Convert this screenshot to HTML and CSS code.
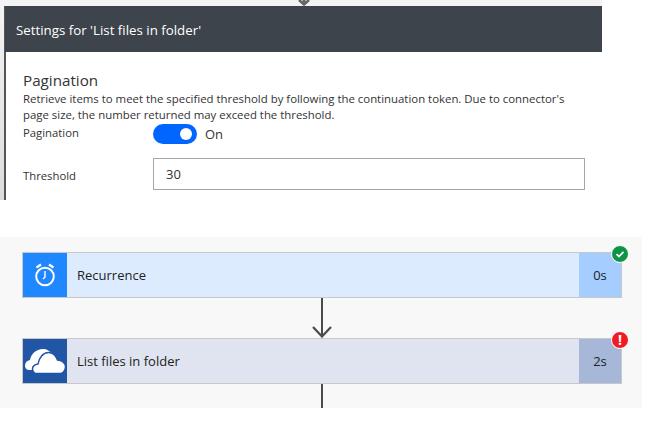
FILE: index.html
```html
<!DOCTYPE html>
<html lang="en">
<head>
    <meta charset="UTF-8">
    <meta name="viewport" content="width=device-width, initial-scale=1.0">
    <title>List files in folder</title>
    <link rel="stylesheet" href="styles.css">
</head>
<body>
    <div class="settings-wrap">
        <svg class="top-arrow" width="16" height="6" viewBox="0 0 16 6" fill="none" stroke="#666"><path d="M8 0 V4" stroke-width="3"/><path d="M3 0 L8 4.500 L13 0" stroke-width="2.6"/></svg>
        <div class="settings">
            <div class="settings-header">Settings for 'List files in folder'</div>
            <div class="settings-body">
                <div class="section-title">Pagination</div>
                <p class="section-desc">Retrieve items to meet the specified threshold by following the continuation token. Due to connector's page size, the number returned may exceed the threshold.</p>
                <div class="field toggle-field">
                    <div class="field-label">Pagination</div>
                    <div class="toggle"><span class="knob"></span></div>
                    <div class="toggle-text">On</div>
                </div>
                <div class="field threshold-field">
                    <div class="field-label">Threshold</div>
                    <div class="input-box">30</div>
                </div>
            </div>
        </div>
    </div>

    <div class="run">
        <div class="card card-recurrence">
            <div class="card-icon">
                <svg width="24" height="24" viewBox="0 0 24 24" fill="none" stroke="#fff">
                    <circle cx="12" cy="13.500" r="8.800" stroke-width="2"/>
                    <path d="M12 8 V14 L10 16" stroke-width="1.4"/>
                    <path d="M3.500 4.500 L8 1.500 M16 1.500 L20.500 4.500" stroke-width="2.200"/>
                </svg>
            </div>
            <div class="card-name">Recurrence</div>
            <div class="card-time">0s</div>
            <span class="badge badge-ok">
                <svg width="10" height="10" viewBox="0 0 10 10"><path d="M1.5 5.2 L4 7.5 L8.5 2.8" fill="none" stroke="#fff" stroke-width="1.7"/></svg>
            </span>
        </div>
        <div class="connector">
            <svg width="22" height="40" viewBox="0 0 22 40" fill="none" stroke="#4a4a4a"><path d="M11 0 V38" stroke-width="2"/><path d="M2 29 L11 38.5 L20 29" stroke-width="2.2"/></svg>
        </div>
        <div class="card card-files">
            <div class="card-icon">
                <svg width="42" height="28" viewBox="0 0 42 28" fill="#fff">
                    <path d="M5 23 C2 23 1 20.500 1 18.500 C1 15.500 3 13.500 6 13 C7 7 12 2 19 2 C23 2 26 4 28 7 L20 14 L10 23 Z"/>
                    <path stroke="#2155a5" stroke-width="1.500" d="M12 26.500 C10 26.500 8.500 24 8.500 22 C8.500 19.500 11 17.500 14 17 C15 11 19 5.500 24.500 5.500 C29 5.500 32 9 33.500 13 C37.500 13 41.500 16 41.500 20 C41.500 24 38.500 26.500 36 26.500 Z"/>
                </svg>
            </div>
            <div class="card-name">List files in folder</div>
            <div class="card-time">2s</div>
            <span class="badge badge-error">!</span>
        </div>
        <div class="connector-end"></div>
    </div>
</body>
</html>
```

FILE: styles.css
```css
body {
    margin: 0;
    background: #fff;
    font-family: "Open Sans", "Noto Sans", Arial, sans-serif;
    color: #333;
}
.settings-wrap {
    position: relative;
    width: 602px;
    height: 200px;
    padding-top: 6px;
    box-sizing: border-box;
    background: linear-gradient(#f4f4f4, #dcdcdc);
}
.top-arrow {
    position: absolute;
    left: 296px;
    top: 0;
}
.settings {
    height: 194px;
    margin-left: 4px;
    border-left: 2px solid #555;
    background: #fff;
}
.settings-header {
    height: 46px;
    margin-left: -1px;
    padding-left: 11px;
    background: #3d444b;
    color: #fff;
    font-size: 13.3px;
    line-height: 48px;
}
.settings-body {
    padding: 17px 17px 0;
}
.section-title {
    font-size: 15.2px;
    line-height: 22px;
    color: #333;
}
.section-desc {
    margin: 0;
    width: 560px;
    font-size: 11.4px;
    line-height: 16px;
}
.field {
    display: flex;
    align-items: center;
}
.field-label {
    width: 130px;
    font-size: 11.3px;
}
.toggle-field {
    height: 20px;
    margin-top: 1px;
}
.toggle-field .field-label {
    margin-top: -3px;
}
.toggle {
    display: flex;
    justify-content: flex-end;
    align-items: center;
    width: 44px;
    height: 20px;
    padding-right: 5px;
    box-sizing: border-box;
    border-radius: 10px;
    background: #0066ff;
}
.knob {
    width: 12px;
    height: 12px;
    border-radius: 50%;
    background: #fff;
}
.toggle-text {
    margin-left: 8px;
    font-size: 13px;
}
.threshold-field {
    margin-top: 14px;
}
.threshold-field .field-label {
    margin-top: 2px;
}
.input-box {
    width: 432px;
    height: 32px;
    padding-left: 12px;
    box-sizing: border-box;
    border: 1px solid #a6a6a6;
    font-size: 13px;
    line-height: 31px;
}
.run {
    display: flex;
    flex-direction: column;
    width: 642px;
    margin-top: 37px;
    padding: 15px 0 0 22px;
    box-sizing: border-box;
    background: #f8f8f8;
}
.card {
    position: relative;
    display: flex;
    align-items: stretch;
    width: 600px;
    height: 46px;
    box-sizing: border-box;
    border: 1px solid #c8c8c8;
    font-size: 13px;
    line-height: 45px;
    color: #222;
}
.card-icon {
    display: flex;
    justify-content: center;
    align-items: center;
    width: 44px;
}
.card-name {
    flex: 1;
    padding-left: 10px;
}
.card-time {
    width: 42px;
    text-align: center;
}
.card-recurrence {
    background: #ddebff;
}
.card-recurrence .card-icon {
    background: #1f87ff;
}
.card-recurrence .card-time {
    background: #a5cdff;
}
.card-files {
    background: #dfe4f0;
}
.card-files .card-icon {
    background: #2155a5;
}
.card-files .card-time {
    background: #a6b7d8;
}
.badge {
    position: absolute;
    top: -8px;
    right: -8px;
    display: flex;
    justify-content: center;
    align-items: center;
    width: 16px;
    height: 16px;
    border: 1px solid #fff;
    border-radius: 50%;
    color: #fff;
    font-size: 14px;
    font-weight: 700;
    line-height: 16px;
}
.badge-ok {
    background: #0e9447;
}
.badge-error {
    background: #ef1c25;
}
.connector {
    display: flex;
    justify-content: center;
    width: 600px;
    height: 40px;
}
.connector-end {
    width: 2px;
    height: 24px;
    margin-left: 299px;
    background: #4a4a4a;
}
```
